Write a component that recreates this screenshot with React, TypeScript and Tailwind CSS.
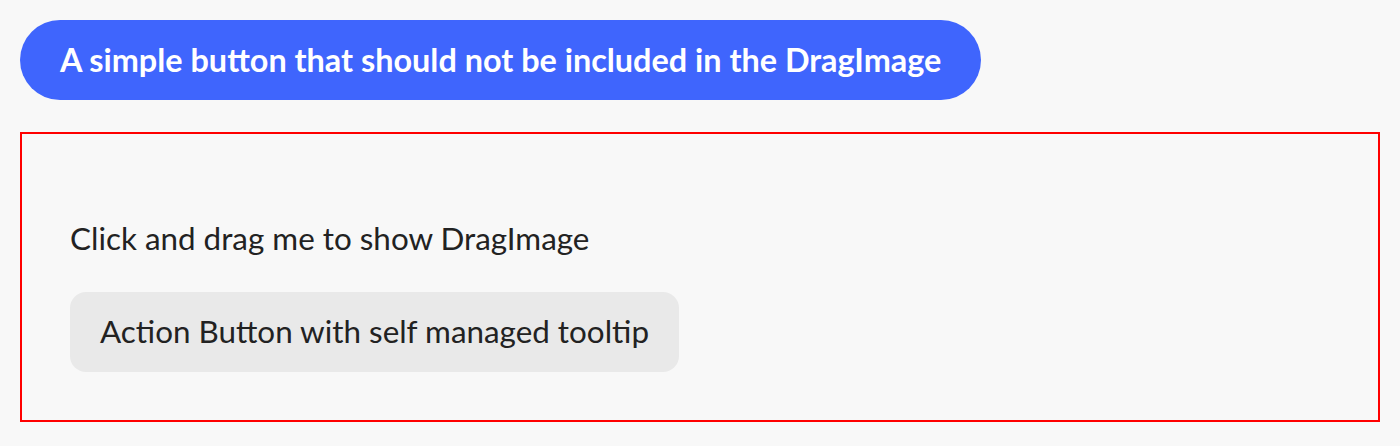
const App = () => {
  return (
    <div
      className="min-h-[446px] w-full bg-[#f8f8f8] px-5 pt-5 text-[#222222]"
      style={{ fontFamily: "Lato, 'Noto Sans', sans-serif" }}
    >
      <button className="flex h-20 items-center rounded-full bg-[#3f65fd] px-10 text-[32.4px] font-bold text-white">
        A simple button that should not be included in the DragImage
      </button>
      <div className="mt-8 flex h-[290px] flex-col items-start border-2 border-[#ff0000] pl-12 pt-[84px]">
        <p className="h-10 text-[31.4px] leading-10">Click and drag me to show DragImage</p>
        <button className="mt-[34px] flex h-20 items-center rounded-2xl bg-[#e9e9e9] px-[30px] text-[31.4px]">
          Action Button with self managed tooltip
        </button>
      </div>
    </div>
  );
};

export default App;
